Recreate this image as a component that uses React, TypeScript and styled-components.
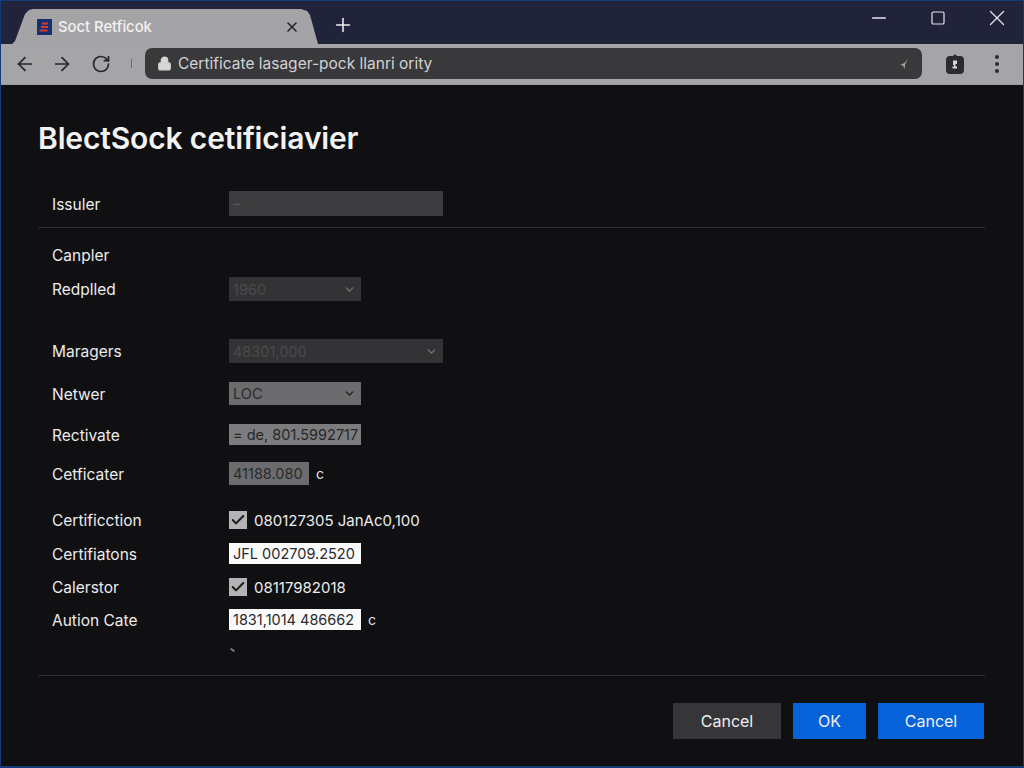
import styled, { createGlobalStyle } from 'styled-components';
import { ArrowLeft, ArrowRight, Check, ChevronDown, Lock, Minus, Plus, RotateCw, Square, X } from 'lucide-react';

const Global = createGlobalStyle`
  html, body {
    margin: 0;
    padding: 0;
    background: #101013;
  }
  * {
    box-sizing: border-box;
  }
`;

const Frame = styled.div`
  width: 1024px;
  height: 768px;
  border: 1px solid #143a78;
  border-bottom-width: 2px;
  display: flex;
  flex-direction: column;
  overflow: hidden;
  background: #101013;
  font-family: Inter, 'Liberation Sans', sans-serif;
`;

const TitleBar = styled.div`
  height: 43px;
  flex: none;
  background: #20233a;
  display: flex;
  align-items: flex-end;
  padding-left: 11px;
`;

const Tab = styled.div`
  width: 306px;
  height: 35px;
  background: #a4a4a6;
  clip-path: polygon(0 100%, 3px 32px, 13px 5px, 17px 1px, 21px 0, 289px 0, 295px 2px, 298px 6px, 306px 100%);
  display: flex;
  align-items: center;
  padding: 0 18px 0 25px;
  color: #f2f2f2;
  font-size: 14.8px;
  font-weight: 500;
`;

const TabTitle = styled.span`
  flex: 1;
  margin-left: 6px;
`;

const TabClose = styled(X)`
  color: #24242c;
`;

const NewTab = styled(Plus)`
  color: #f0f0f0;
  margin: 0 0 8px 14px;
`;

const WindowControls = styled.div`
  margin-left: auto;
  align-self: flex-start;
  display: flex;
  gap: 39px;
  padding: 6px 16px 0 0;
  color: #e4e4ea;
`;

const WindowControl = styled.span`
  width: 20px;
  height: 22px;
  display: flex;
  align-items: center;
  justify-content: center;
  svg {
    flex: none;
  }
`;

const Toolbar = styled.div`
  height: 41px;
  flex: none;
  background: #a5a5a7;
  display: flex;
  align-items: center;
  padding: 0 15px 1px 13px;
  color: #25252b;
  border-bottom: 1px solid #9a9a9c;
`;

const NavButton = styled.span<{ $gap: number }>`
  display: flex;
  margin-right: ${(p) => p.$gap}px;
`;

const Separator = styled.span`
  width: 1px;
  height: 9px;
  background: #6a6a6c;
  margin-right: 13px;
`;

const AddressBar = styled.div`
  width: 777px;
  height: 31px;
  background: #39393b;
  border-radius: 7px;
  display: flex;
  align-items: center;
  padding: 0 12px 0 12px;
  color: #d2d2d4;
  font-size: 15.5px;
  gap: 6px;
`;

const AddressText = styled.span`
  flex: 1;
`;

const ExtensionIcon = styled.svg`
  flex: none;
  margin-left: 24px;
`;

const MenuDots = styled.span`
  margin-left: 31px;
  display: flex;
  flex-direction: column;
  gap: 3px;
  i {
    width: 4px;
    height: 4px;
    border-radius: 50%;
    background: #2a2a30;
  }
`;

const Content = styled.main`
  flex: 1;
  padding: 36px 38px 0 37px;
  display: flex;
  flex-direction: column;
`;

const Heading = styled.h1`
  margin: 0 0 36px;
  height: 34px;
  line-height: 34px;
  font-size: 30px;
  font-weight: 600;
  letter-spacing: -0.15px;
  color: #f2f2f2;
`;

const Rule = styled.hr<{ $top: number }>`
  margin: ${(p) => p.$top}px 0 0;
  height: 1px;
  border: 0;
  background: #2e2e30;
`;

const Row = styled.div<{ $top: number; $height: number }>`
  margin-top: ${(p) => p.$top}px;
  height: ${(p) => p.$height}px;
  padding-left: 14px;
  display: flex;
  align-items: center;
`;

const Label = styled.span`
  width: 177px;
  flex: none;
  padding-top: 1px;
  color: #ececec;
  font-size: 15.5px;
`;

const tones = {
  faint: { bg: '#333335', fg: '#4a4a4c', arrow: '#77777a' },
  dim: { bg: '#3c3c3e', fg: '#575759', arrow: '#8a8a8c' },
  mid: { bg: '#6c6c6e', fg: '#2a2a2c', arrow: '#1c1c1e' },
  soft: { bg: '#7c7c7e', fg: '#262628', arrow: '#1c1c1e' },
  white: { bg: '#fafafa', fg: '#2a2a2c', arrow: '#1c1c1e' },
};

const Field = styled.div<{ $w: number; $tone: keyof typeof tones }>`
  width: ${(p) => p.$w}px;
  height: 100%;
  background: ${(p) => tones[p.$tone].bg};
  color: ${(p) => tones[p.$tone].fg};
  font-size: 14.5px;
  white-space: nowrap;
  overflow: hidden;
  display: flex;
  align-items: center;
  justify-content: space-between;
  padding: 0 5px 0 4px;
  svg {
    color: ${(p) => tones[p.$tone].arrow};
  }
`;

const Suffix = styled.span`
  margin-left: 7px;
  color: #e4e4e4;
  font-size: 14px;
`;

const CheckBox = styled.span`
  width: 18px;
  height: 18px;
  background: #b4b4b6;
  color: #1a1a1c;
  display: flex;
  align-items: center;
  justify-content: center;
`;

const CheckText = styled.span`
  margin-left: 7px;
  color: #ececec;
  font-size: 15px;
`;

const Tick = styled.span`
  margin: 19px 0 0 192px;
  width: 5px;
  height: 2px;
  background: #77777a;
  transform: rotate(40deg);
`;

const Footer = styled.div`
  margin-top: 27px;
  padding-right: 1px;
  display: flex;
  justify-content: flex-end;
  gap: 12px;
`;

const Button = styled.button<{ $w: number; $primary?: boolean }>`
  width: ${(p) => p.$w}px;
  height: 36px;
  border: 0;
  padding: 0;
  background: ${(p) => (p.$primary ? '#0562d8' : '#363638')};
  color: #f0f0f0;
  font-family: inherit;
  font-size: 16px;
`;

const fields = [
  { label: 'Redplled', top: 11, height: 24, w: 132, tone: 'faint', value: '1960', select: true },
  { label: 'Maragers', top: 38, height: 24, w: 214, tone: 'faint', value: '48301,000', select: true },
  { label: 'Netwer', top: 19, height: 23, w: 132, tone: 'mid', value: 'LOC', select: true },
  { label: 'Rectivate', top: 19, height: 21, w: 132, tone: 'soft', value: '= de, 801.5992717' },
  { label: 'Cetficater', top: 17, height: 23, w: 80, tone: 'mid', value: '41188.080', suffix: 'c' },
] as const;

const App = () => {
  return (
    <Frame>
      <Global />
      <TitleBar>
        <Tab>
          <svg width="15" height="16" viewBox="0 0 15 16">
            <rect width="15" height="16" fill="#14306e" />
            <path d="M5 3.5h6v2H5zM4 7h7v2H4zM2.5 10.5h8v2h-8z" fill="#d8382c" />
          </svg>
          <TabTitle>Soct Retficok</TabTitle>
          <TabClose size={16} strokeWidth={2.4} />
        </Tab>
        <NewTab size={22} strokeWidth={1.7} />
        <WindowControls>
          <WindowControl><Minus size={22} strokeWidth={1.4} /></WindowControl>
          <WindowControl><Square size={16} strokeWidth={1.8} /></WindowControl>
          <WindowControl><X size={26} strokeWidth={1.2} /></WindowControl>
        </WindowControls>
      </TitleBar>
      <Toolbar>
        <NavButton $gap={15}><ArrowLeft size={22} strokeWidth={1.9} /></NavButton>
        <NavButton $gap={18}><ArrowRight size={22} strokeWidth={1.9} /></NavButton>
        <NavButton $gap={20}><RotateCw size={20} strokeWidth={2} /></NavButton>
        <Separator />
        <AddressBar>
          <Lock size={15} strokeWidth={2.4} fill="#d8d8da" />
          <AddressText>Certificate lasager-pock llanri ority</AddressText>
          <svg width="12" height="12" viewBox="0 0 12 12">
            <path d="M10 1 6.5 5 2 7l3 .6L6.5 11l.6-4.4z" fill="#a8a8aa" />
          </svg>
        </AddressBar>
        <ExtensionIcon width="18" height="20" viewBox="0 0 18 20">
          <path d="M4 2h3l2-2 2 2h3a4 4 0 0 1 4 4v10a4 4 0 0 1-4 4H4a4 4 0 0 1-4-4V6a4 4 0 0 1 4-4z" fill="#2c2c30" />
          <path d="M7 6.5h4v3.5h-1.5v2.5H11v2H6.5v-2H8V11H7z" fill="#d8d8d8" />
        </ExtensionIcon>
        <MenuDots><i /><i /><i /></MenuDots>
      </Toolbar>
      <Content>
        <Heading>BlectSock cetificiavier</Heading>
        <Row $top={0} $height={25}>
          <Label>Issuler</Label>
          <Field $w={214} $tone="dim">–</Field>
        </Row>
        <Rule $top={11} />
        <Row $top={15} $height={23}>
          <Label>Canpler</Label>
        </Row>
        {fields.map((f) => (
          <Row key={f.label} $top={f.top} $height={f.height}>
            <Label>{f.label}</Label>
            <Field $w={f.w} $tone={f.tone}>
              {f.value}
              {'select' in f && <ChevronDown size={13} strokeWidth={2.4} />}
            </Field>
            {'suffix' in f && <Suffix>{f.suffix}</Suffix>}
          </Row>
        ))}
        <Row $top={25} $height={20}>
          <Label>Certificction</Label>
          <CheckBox><Check size={16} strokeWidth={3} /></CheckBox>
          <CheckText>080127305 JanAc0,100</CheckText>
        </Row>
        <Row $top={13} $height={21}>
          <Label>Certifiatons</Label>
          <Field $w={132} $tone="white">JFL 002709.2520</Field>
        </Row>
        <Row $top={13} $height={20}>
          <Label>Calerstor</Label>
          <CheckBox><Check size={16} strokeWidth={3} /></CheckBox>
          <CheckText>08117982018</CheckText>
        </Row>
        <Row $top={12} $height={21}>
          <Label>Aution Cate</Label>
          <Field $w={132} $tone="white">1831,1014 486662</Field>
          <Suffix>c</Suffix>
        </Row>
        <Tick />
        <Rule $top={24} />
        <Footer>
          <Button $w={108}>Cancel</Button>
          <Button $w={73} $primary>OK</Button>
          <Button $w={106} $primary>Cancel</Button>
        </Footer>
      </Content>
    </Frame>
  );
};

export default App;
